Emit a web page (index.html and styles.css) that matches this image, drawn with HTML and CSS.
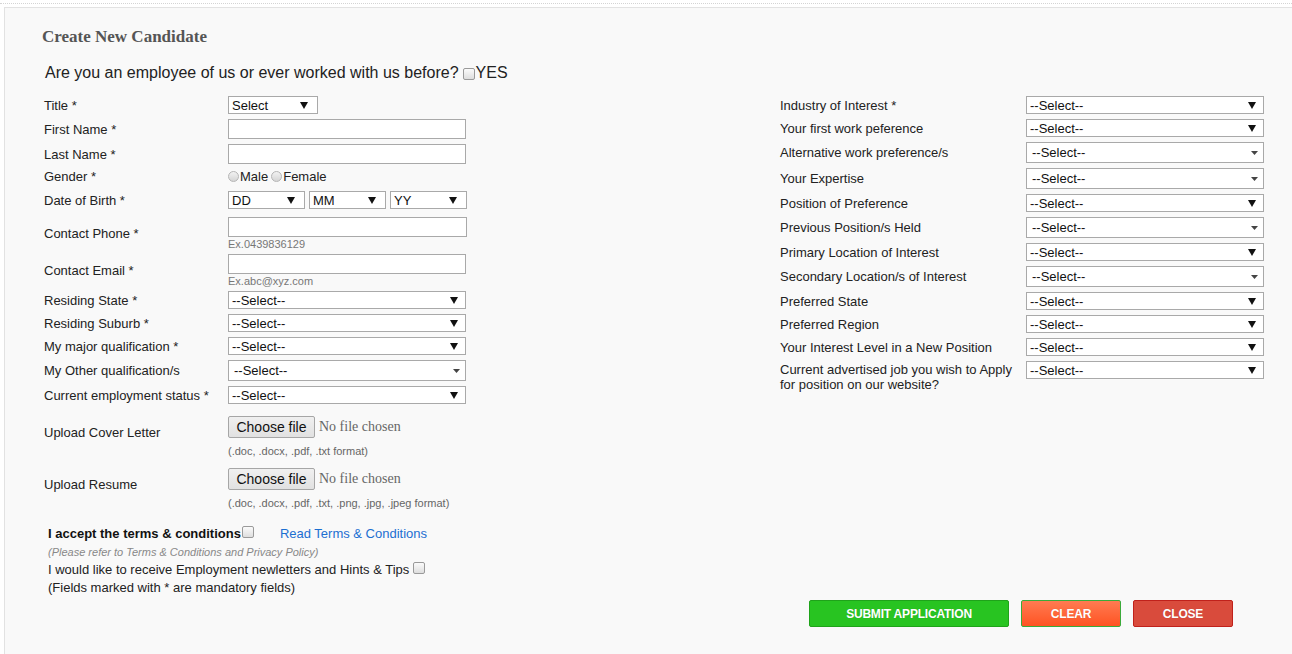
FILE: index.html
```html
<!DOCTYPE html>
<html lang="en">
<head>
<meta charset="utf-8">
<title>Create New Candidate</title>
<link rel="stylesheet" href="styles.css">
</head>
<body>
<div class="dots"></div>
<div class="panel">
  <h2 class="title">Create New Candidate</h2>
  <p class="question">Are you an employee of us or ever worked with us before? <input type="checkbox" class="cb cb-q"><span>YES</span></p>
  <form class="grid">
    <div class="col col-left">
      <div class="row h18"><label class="lbl">Title *</label><div class="sel w90"><select><option>Select</option></select><svg class="caret" width="8" height="7" viewBox="0 0 8 7"><polygon points="0,0 8,0 4,7"/></svg></div></div>
      <div class="row h20"><label class="lbl">First Name *</label><input class="txt" type="text"></div>
      <div class="row h20"><label class="lbl">Last Name *</label><input class="txt" type="text"></div>
      <div class="row h17 gender"><label class="lbl">Gender *</label><div class="radios"><input type="radio" name="g" class="rd"><span>Male</span><input type="radio" name="g" class="rd"><span>Female</span></div></div>
      <div class="row h18 dob"><label class="lbl">Date of Birth *</label>
        <div class="dobs">
          <div class="sel w77"><select><option>DD</option></select><svg class="caret" width="8" height="7" viewBox="0 0 8 7"><polygon points="0,0 8,0 4,7"/></svg></div>
          <div class="sel w77"><select><option>MM</option></select><svg class="caret" width="8" height="7" viewBox="0 0 8 7"><polygon points="0,0 8,0 4,7"/></svg></div>
          <div class="sel w77"><select><option>YY</option></select><svg class="caret" width="8" height="7" viewBox="0 0 8 7"><polygon points="0,0 8,0 4,7"/></svg></div>
        </div>
      </div>
      <div class="row"><label class="lbl">Contact Phone *</label><div class="stack"><input class="txt w239" type="text"><span class="hint">Ex.0439836129</span></div></div>
      <div class="row"><label class="lbl">Contact Email *</label><div class="stack"><input class="txt" type="text"><span class="hint">Ex.abc@xyz.com</span></div></div>
      <div class="row h18"><label class="lbl">Residing State *</label><div class="sel"><select><option>--Select--</option></select><svg class="caret" width="8" height="7" viewBox="0 0 8 7"><polygon points="0,0 8,0 4,7"/></svg></div></div>
      <div class="row h18"><label class="lbl">Residing Suburb *</label><div class="sel"><select><option>--Select--</option></select><svg class="caret" width="8" height="7" viewBox="0 0 8 7"><polygon points="0,0 8,0 4,7"/></svg></div></div>
      <div class="row h18"><label class="lbl">My major qualification *</label><div class="sel"><select><option>--Select--</option></select><svg class="caret" width="8" height="7" viewBox="0 0 8 7"><polygon points="0,0 8,0 4,7"/></svg></div></div>
      <div class="row h21"><label class="lbl">My Other qualification/s</label><div class="sel multi"><select><option>--Select--</option></select><svg class="caret small" width="7" height="4" viewBox="0 0 7 4"><polygon points="0,0 7,0 3.5,4"/></svg></div></div>
      <div class="row h18"><label class="lbl">Current employment status *</label><div class="sel"><select><option>--Select--</option></select><svg class="caret" width="8" height="7" viewBox="0 0 8 7"><polygon points="0,0 8,0 4,7"/></svg></div></div>
      <div class="row file first-file"><label class="lbl">Upload Cover Letter</label><div class="stack"><div class="filebox"><button type="button" class="filebtn">Choose file</button><span class="nofile">No file chosen</span></div><span class="fmt">(.doc, .docx, .pdf, .txt format)</span></div></div>
      <div class="row file second-file"><label class="lbl">Upload Resume</label><div class="stack"><div class="filebox"><button type="button" class="filebtn">Choose file</button><span class="nofile">No file chosen</span></div><span class="fmt">(.doc, .docx, .pdf, .txt, .png, .jpg, .jpeg format)</span></div></div>
      <div class="terms">
        <div class="line"><strong class="accept">I accept the terms &amp; conditions</strong><input type="checkbox" class="cb cb-t"><a href="#" class="link">Read Terms &amp; Conditions</a></div>
        <div class="line note">(Please refer to Terms &amp; Conditions and Privacy Policy)</div>
        <div class="line">I would like to receive Employment newletters and Hints &amp; Tips <input type="checkbox" class="cb cb-n"></div>
        <div class="line">(Fields marked with * are mandatory fields)</div>
      </div>
    </div>
    <div class="col col-right">
      <div class="row h18"><label class="lbl rl">Industry of Interest *</label><div class="sel"><select><option>--Select--</option></select><svg class="caret" width="8" height="7" viewBox="0 0 8 7"><polygon points="0,0 8,0 4,7"/></svg></div></div>
      <div class="row h18"><label class="lbl rl">Your first work peference</label><div class="sel"><select><option>--Select--</option></select><svg class="caret" width="8" height="7" viewBox="0 0 8 7"><polygon points="0,0 8,0 4,7"/></svg></div></div>
      <div class="row h21"><label class="lbl rl">Alternative work preference/s</label><div class="sel multi"><select><option>--Select--</option></select><svg class="caret small" width="7" height="4" viewBox="0 0 7 4"><polygon points="0,0 7,0 3.5,4"/></svg></div></div>
      <div class="row h21"><label class="lbl rl">Your Expertise</label><div class="sel multi"><select><option>--Select--</option></select><svg class="caret small" width="7" height="4" viewBox="0 0 7 4"><polygon points="0,0 7,0 3.5,4"/></svg></div></div>
      <div class="row h18"><label class="lbl rl">Position of Preference</label><div class="sel"><select><option>--Select--</option></select><svg class="caret" width="8" height="7" viewBox="0 0 8 7"><polygon points="0,0 8,0 4,7"/></svg></div></div>
      <div class="row h21"><label class="lbl rl">Previous Position/s Held</label><div class="sel multi"><select><option>--Select--</option></select><svg class="caret small" width="7" height="4" viewBox="0 0 7 4"><polygon points="0,0 7,0 3.5,4"/></svg></div></div>
      <div class="row h18"><label class="lbl rl">Primary Location of Interest</label><div class="sel"><select><option>--Select--</option></select><svg class="caret" width="8" height="7" viewBox="0 0 8 7"><polygon points="0,0 8,0 4,7"/></svg></div></div>
      <div class="row h21"><label class="lbl rl">Secondary Location/s of Interest</label><div class="sel multi"><select><option>--Select--</option></select><svg class="caret small" width="7" height="4" viewBox="0 0 7 4"><polygon points="0,0 7,0 3.5,4"/></svg></div></div>
      <div class="row h18"><label class="lbl rl">Preferred State</label><div class="sel"><select><option>--Select--</option></select><svg class="caret" width="8" height="7" viewBox="0 0 8 7"><polygon points="0,0 8,0 4,7"/></svg></div></div>
      <div class="row h18"><label class="lbl rl">Preferred Region</label><div class="sel"><select><option>--Select--</option></select><svg class="caret" width="8" height="7" viewBox="0 0 8 7"><polygon points="0,0 8,0 4,7"/></svg></div></div>
      <div class="row h18"><label class="lbl rl">Your Interest Level in a New Position</label><div class="sel"><select><option>--Select--</option></select><svg class="caret" width="8" height="7" viewBox="0 0 8 7"><polygon points="0,0 8,0 4,7"/></svg></div></div>
      <div class="row top"><label class="lbl rl two">Current advertised job you wish to Apply for position on our website?</label><div class="sel"><select><option>--Select--</option></select><svg class="caret" width="8" height="7" viewBox="0 0 8 7"><polygon points="0,0 8,0 4,7"/></svg></div></div>
      <div class="actions">
        <button type="button" class="btn submit">SUBMIT APPLICATION</button>
        <button type="button" class="btn clear">CLEAR</button>
        <button type="button" class="btn close">CLOSE</button>
      </div>
    </div>
  </form>
</div>
</body>
</html>
```

FILE: styles.css
```css
html, body {
  margin: 0;
  padding: 0;
  background: #ffffff;
  font-family: "Liberation Sans", Arial, sans-serif;
  font-size: 13px;
  color: #222;
  overflow: hidden;
}

.dots {
  margin-top: 3px;
  height: 0;
  border-top: 1px dotted #d4d4d4;
}

.panel {
  margin-top: 3px;
  margin-left: 4px;
  height: 647px;
  box-sizing: border-box;
  background: #f9f9f9;
  border: 1px solid #e2e2e2;
  border-right: 0;
  border-bottom: 0;
  padding: 19px 0 0 39px;
  overflow: hidden;
}

.title {
  margin: 0 0 0 -2px;
  font-family: "Liberation Serif", "Times New Roman", serif;
  font-weight: bold;
  font-size: 17px;
  line-height: 20px;
  color: #555;
}

.question {
  margin: 16px 0 0 1px;
  font-size: 16px;
  line-height: 20px;
  color: #222;
  display: flex;
  align-items: center;
}

.grid {
  margin-top: 13px;
  display: grid;
  grid-template-columns: 736px 484px;
}

.col {
  display: flex;
  flex-direction: column;
  gap: 5px;
}

.col-left {
  padding-bottom: 30px;
}

.row {
  display: flex;
  align-items: center;
}

.row.top {
  align-items: flex-start;
}

.h17 { height: 17px; }
.h18 { height: 18px; }
.h20 { height: 20px; }
.h21 { height: 21px; }

.lbl {
  width: 184px;
  flex: none;
  line-height: 15px;
}

.lbl.rl {
  width: 246px;
}

.lbl.two {
  padding-top: 1px;
  line-height: 15px;
}

.txt {
  box-sizing: border-box;
  width: 238px;
  height: 20px;
  margin: 0;
  border: 1px solid #a9a9a9;
  background: #fff;
  padding: 0 3px;
  font: inherit;
}

.txt.w239 { width: 239px; }

.stack {
  display: flex;
  flex-direction: column;
  align-items: flex-start;
}

.hint {
  font-size: 11px;
  line-height: 12px;
  height: 12px;
  padding-top: 1px;
  box-sizing: border-box;
  overflow: visible;
  color: #777;
}

.sel {
  box-sizing: border-box;
  width: 238px;
  height: 18px;
  display: flex;
  align-items: center;
  border: 1px solid #a9a9a9;
  background: #fff;
  padding-right: 7px;
}

.sel.w90 { width: 90px; padding-right: 9px; }
.sel.w77 { width: 77px; padding-right: 9px; }

.sel.multi {
  height: 21px;
  padding-right: 5px;
}

.sel select {
  -webkit-appearance: none;
  appearance: none;
  flex: 1;
  min-width: 0;
  height: 100%;
  border: 0;
  margin: 0;
  padding: 0 0 0 3px;
  background: transparent;
  font-family: "Liberation Sans", Arial, sans-serif;
  font-size: 13px;
  color: #111;
  outline: none;
}

.sel.multi select {
  padding-left: 5px;
}

.caret {
  flex: none;
  fill: #111;
}

.caret.small {
  fill: #444;
}

.dobs {
  display: flex;
  gap: 4px;
}

.dob {
  margin-bottom: 3px;
}

.gender {
  align-items: flex-start;
}

.radios {
  display: flex;
  align-items: center;
  height: 14px;
}

.rd {
  -webkit-appearance: none;
  appearance: none;
  width: 11px;
  height: 11px;
  margin: 0 1px 0 0;
  border: 1px solid #b5b5b5;
  border-radius: 50%;
  background: linear-gradient(#f2f2f2, #d5d5d5);
}

.radios span + .rd {
  margin-left: 3px;
}

.cb {
  -webkit-appearance: none;
  appearance: none;
  width: 12px;
  height: 12px;
  margin: 0;
  box-sizing: border-box;
  border: 1px solid #9a9a9a;
  border-radius: 2px;
  background: linear-gradient(#fbfbfb, #dedede);
}

.cb-q {
  margin: 2px 1px 0 4px;
}

.file {
  align-items: flex-start;
}

.file .lbl {
  margin-top: 9px;
}

.first-file {
  margin-top: 7px;
}

.second-file {
  margin-top: 5px;
}

.filebox {
  display: flex;
  align-items: center;
  height: 22px;
}

.filebtn {
  box-sizing: border-box;
  height: 22px;
  width: 87px;
  margin: 0;
  padding: 0;
  border: 1px solid #a6a6a6;
  border-radius: 2px;
  background: linear-gradient(#f0f0f0, #e1e1e1);
  font-family: "Liberation Sans", Arial, sans-serif;
  font-size: 14px;
  color: #111;
}

.nofile {
  margin-left: 4px;
  font-family: "Liberation Serif", "Times New Roman", serif;
  font-size: 14px;
  color: #666;
}

.fmt {
  margin-top: 7px;
  font-size: 11px;
  line-height: 13px;
  color: #666;
}

.terms {
  margin-top: 10px;
  padding-left: 4px;
  display: flex;
  flex-direction: column;
}

.line {
  line-height: 18px;
  display: flex;
  align-items: center;
  white-space: pre;
}

.accept {
  font-weight: bold;
  color: #111;
}

.cb-t {
  margin: -4px 0 0 1px;
}

.cb-n {
  margin: -4px 0 0 0;
}

.link {
  margin-left: 26px;
  color: #1c6fd1;
  text-decoration: none;
}

.note {
  font-size: 11px;
  font-style: italic;
  color: #888;
}

.actions {
  margin-top: auto;
  margin-left: 29px;
  display: flex;
  gap: 12px;
}

.btn {
  box-sizing: border-box;
  height: 27px;
  margin: 0;
  padding: 0;
  border-radius: 2px;
  font-family: "Liberation Sans", Arial, sans-serif;
  font-weight: bold;
  font-size: 12px;
  letter-spacing: -0.2px;
  color: #fff;
  text-shadow: 0 0 1px rgba(0, 0, 0, 0.15);
}

.submit {
  width: 200px;
  background: #28c421;
  border: 1px solid #1fa31a;
}

.clear {
  width: 100px;
  background: linear-gradient(#ff7b52, #ff5322);
  border: 1px solid #3aaa3a;
}

.close {
  width: 100px;
  background: #d94b3c;
  border: 1px solid #c0211b;
}
```
